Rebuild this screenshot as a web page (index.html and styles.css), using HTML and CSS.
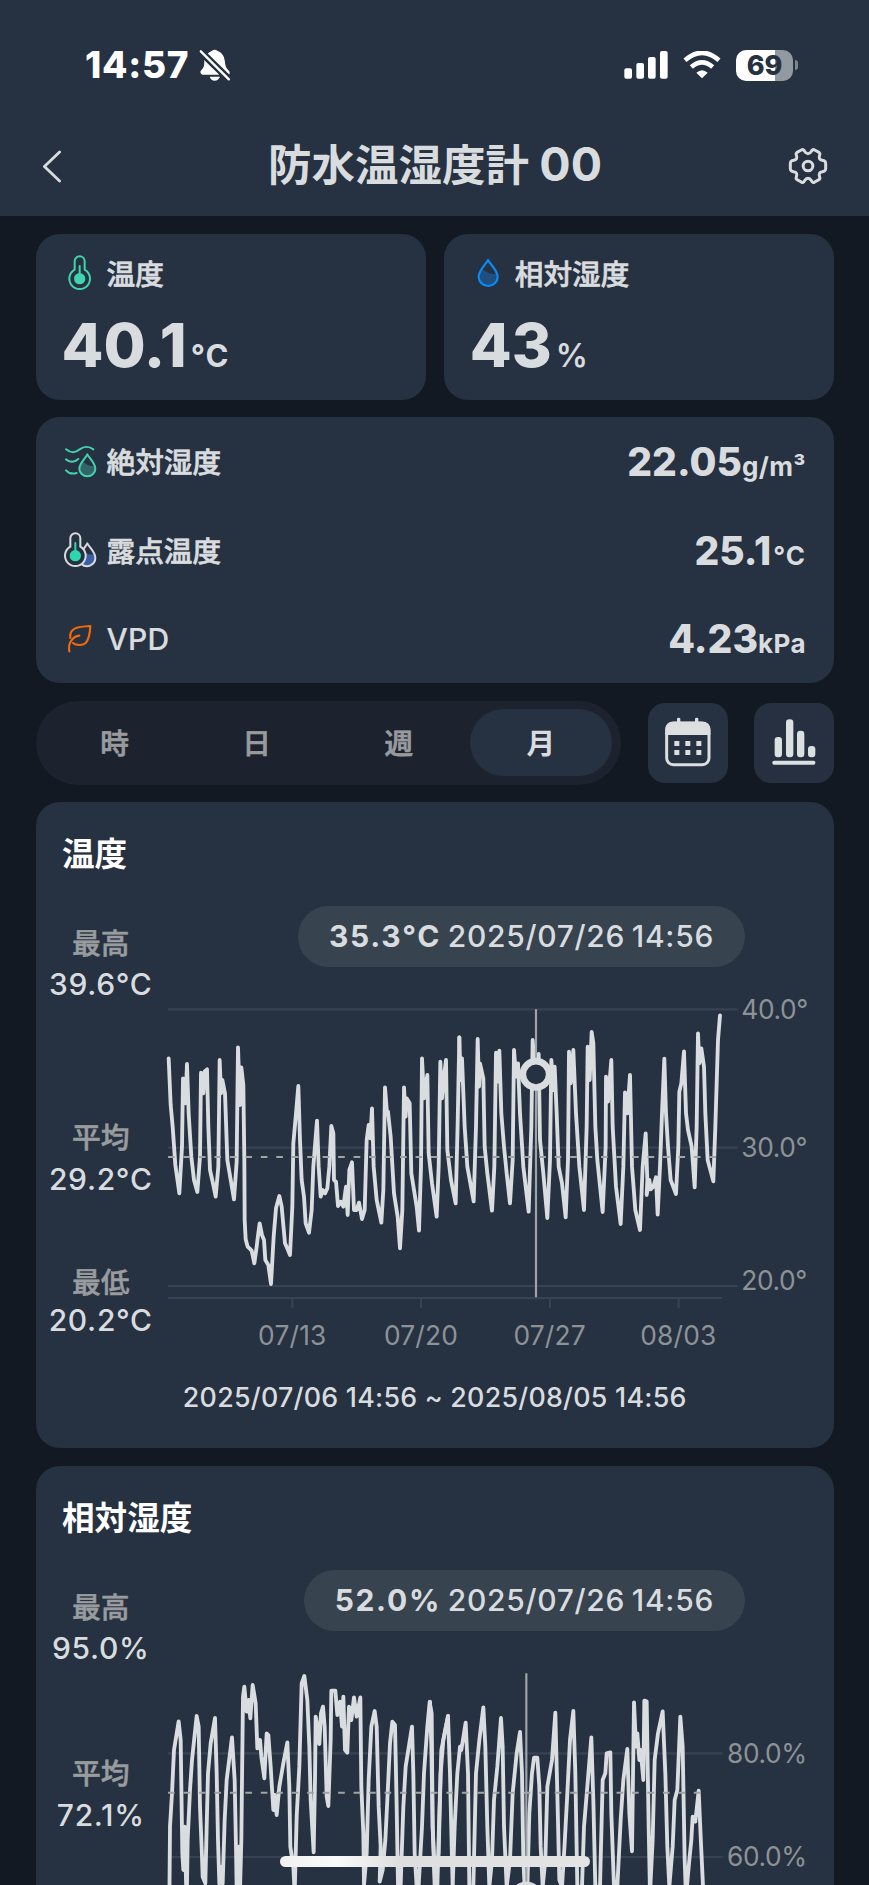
FILE: index.html
```html
<!DOCTYPE html>
<html lang="ja">
<head>
    <meta charset="UTF-8">
    <meta name="viewport" content="width=device-width, initial-scale=1.0">
    <title>防水温湿度計 00</title>
    <link rel="stylesheet" href="styles.css">
</head>
<body>
    <header>
        <div class="status-bar">
            <span class="clock">14:57</span>
            <svg class="bell" viewBox="0 0 96 100">
                <path d="M26 14 C32 8 35 8 38 6 Q47 -2 56 6 C70 11 76 22 78 38 C79 54 84 60 91 67 Q94 74 91 77 Z M15 33 L61 78 H10 Q1 74 5 66 C14 58 17 50 15 33Z M32 84 H63 Q58 96 47 96 Q36 96 32 84Z" fill="#fff"/>
                <path d="M5 7 L90 92" stroke="#263141" stroke-width="15"/>
                <path d="M5 7 L90 92" stroke="#fff" stroke-width="7" stroke-linecap="round"/>
            </svg>
            <svg class="signal" viewBox="0 0 132 84" fill="#fff">
                <rect x="1" y="52" width="23" height="31" rx="6"/>
                <rect x="37" y="36" width="23" height="47" rx="6"/>
                <rect x="72" y="18" width="23" height="65" rx="6"/>
                <rect x="108" y="0" width="23" height="83" rx="6"/>
            </svg>
            <svg class="wifi" viewBox="0 0 112 84" fill="none" stroke="#fff">
                <path d="M5 28 Q56 -17 107 28" stroke-width="14"/>
                <path d="M24 48 Q56 20 88 48" stroke-width="14"/>
                <path d="M39 65 Q56 50 73 65 L56 82Z" fill="#fff" stroke="none"/>
            </svg>
            <div class="battery"><span>69</span></div>
            <div class="battery-tip"></div>
        </div>
        <div class="title-bar">
            <svg class="back" viewBox="0 0 60 100" fill="none" stroke="#d9dcdf" stroke-width="8.5" stroke-linecap="round" stroke-linejoin="round">
                <path d="M53 6 L7 50 L53 94"/>
            </svg>
            <h1>防水温湿度計 <span>00</span></h1>
            <svg class="gear" viewBox="-60 -60 120 120" fill="none" stroke="#d9dcdf" stroke-width="9" stroke-linejoin="round">
                <path d="M0 -37 C8 -37 9 -43 13 -48 Q16 -51 20 -48 L33 -41 Q37 -38 35 -33 C32 -25 34 -18 43 -17 L48 -16 Q53 -14 53 -8 V8 Q53 14 48 16 L43 17 C34 18 32 25 35 33 Q37 38 33 41 L20 48 Q16 51 13 48 C9 43 8 37 0 37 C-8 37 -9 43 -13 48 Q-16 51 -20 48 L-33 41 Q-37 38 -35 33 C-32 25 -34 18 -43 17 L-48 16 Q-53 14 -53 8 V-8 Q-53 -14 -48 -16 L-43 -17 C-34 -18 -32 -25 -35 -33 Q-37 -38 -33 -41 L-20 -48 Q-16 -51 -13 -48 C-9 -43 -8 -37 0 -37Z"/>
                <circle r="14.5"/>
            </svg>
        </div>
    </header>

    <main>
        <section class="current">
            <div class="card current-card">
                <div class="label">
                    <svg class="icon" viewBox="0 0 108 108" fill="none" stroke="#41d3ae" stroke-width="6">
                        <path d="M35 44 V19 a15 15 0 0 1 30 0 V44 a31 31 0 1 1 -30 0Z"/>
                        <path d="M50 33 V70" stroke-linecap="round"/>
                        <circle cx="50" cy="71" r="17" fill="#41d3ae" stroke="none"/>
                    </svg>
                    <span>温度</span>
                </div>
                <div class="big-value">40.1<small>°C</small></div>
            </div>
            <div class="card current-card">
                <div class="label">
                    <svg class="icon" viewBox="0 0 108 108" fill="none">
                        <path d="M23 64 C24 54 28 48 33 44 C45 43 50 60 79 57 L80 64 a28 28 0 0 1 -57 0Z" fill="#1f4f7f"/>
                        <path d="M51 15 C57 27 80 47 80 65 a28.5 28 0 0 1 -57 0 C23 47 45 27 51 15Z" stroke="#0a8bf5" stroke-width="6.5" stroke-linejoin="round"/>
                    </svg>
                    <span>相対湿度</span>
                </div>
                <div class="big-value">43<small class="percent">%</small></div>
            </div>
        </section>

        <section class="card details">
            <div class="detail-row">
                <div class="label">
                    <svg class="icon" viewBox="0 0 108 108" fill="none" stroke="#41d3ae" stroke-width="6" stroke-linecap="round">
                        <path d="M9 19 C26 33 38 30 50 19 C62 10 78 9 91 19 M9 49 C22 59 34 59 46 48 M9 82 C18 92 28 94 41 90"/>
                        <path d="M50 78 C50 66 54 62 60 58 C68 60 72 70 95 70 L97 78 a23 23 0 0 1 -47 0Z" fill="#326567" stroke="none"/>
                        <path d="M73 34 C79 46 97 61 97 77 a24 23 0 0 1 -48 0 C49 61 68 46 73 34Z" stroke-linejoin="round"/>
                    </svg>
                    <span>絶対湿度</span>
                </div>
                <div class="value">22.05<small>g/m³</small></div>
            </div>
            <div class="detail-row">
                <div class="label">
                    <svg class="icon" viewBox="0 0 108 108" fill="none" stroke="#d9dcdf" stroke-width="6">
                        <path d="M60 58 C70 62 74 72 96 66 L97 78 a24 24 0 0 1 -44 14Z" fill="#3a60a6" stroke="none"/>
                        <path d="M60 53 C65 46 70 40 73 34 C79 46 97 61 97 77 C97 98 72 111 55 96" stroke-linejoin="round"/>
                        <path d="M22 44 V19 a15 15 0 0 1 30 0 V44 a31 31 0 1 1 -30 0Z" fill="#263141"/>
                        <path d="M37 33 V70" stroke="#2ed6ad" stroke-linecap="round"/>
                        <circle cx="37" cy="71" r="17" fill="#2ed6ad" stroke="none"/>
                    </svg>
                    <span>露点温度</span>
                </div>
                <div class="value">25.1<small class="degree">°C</small></div>
            </div>
            <div class="detail-row">
                <div class="label">
                    <svg class="icon" viewBox="0 0 108 108" fill="none" stroke="#f26a0a" stroke-width="6.5" stroke-linecap="round" stroke-linejoin="round">
                        <path d="M22 51 C18 20 45 17 82 15 C81 38 75 58 68 66 C58 75 38 73 30 66"/>
                        <path d="M49 44 C30 46 14 65 19 91"/>
                    </svg>
                    <span class="latin">VPD</span>
                </div>
                <div class="value">4.23<small>kPa</small></div>
            </div>
        </section>

        <nav class="toolbar">
            <ul class="range-tabs">
                <li>時</li>
                <li>日</li>
                <li>週</li>
                <li class="active">月</li>
            </ul>
            <button class="calendar-button" aria-label="カレンダー">
                <svg viewBox="0 0 240 240">
                    <g fill="#dcdee0">
                        <path d="M52 96 V80 Q52 56 76 56 H87 V47 Q87 44 92 44 Q97 44 97 47 V56 H141 V47 Q141 44 146 44 Q151 44 151 47 V56 H162 Q187 56 187 80 V96Z"/>
                        <rect x="79" y="114" width="15" height="15"/>
                        <rect x="112" y="114" width="15" height="15"/>
                        <rect x="145" y="114" width="15" height="15"/>
                        <rect x="79" y="141" width="15" height="15"/>
                        <rect x="112" y="141" width="15" height="15"/>
                        <rect x="145" y="141" width="15" height="15"/>
                    </g>
                    <rect x="56" y="60" width="127" height="125" rx="20" fill="none" stroke="#dcdee0" stroke-width="9"/>
                </svg>
            </button>
            <button class="graph-button" aria-label="グラフ">
                <svg viewBox="0 0 240 240" fill="#dbe1e0">
                    <rect x="62" y="102" width="22" height="61" rx="10"/>
                    <rect x="96" y="49" width="22" height="114" rx="10"/>
                    <rect x="129" y="83" width="22" height="80" rx="10"/>
                    <rect x="162" y="129" width="22" height="34" rx="10"/>
                    <rect x="55" y="173" width="129" height="12" rx="5"/>
                </svg>
            </button>
        </nav>

        <section class="card chart-card">
            <h2>温度</h2>
            <div class="chart-body">
                <dl class="stats">
                    <div><dt>最高</dt><dd>39.6°C</dd></div>
                    <div class="average"><dt>平均</dt><dd>29.2°C</dd></div>
                    <div class="lowest"><dt>最低</dt><dd>20.2°C</dd></div>
                </dl>
                <div class="chart">
                    <p class="tooltip"><b>35.3°C</b> 2025/07/26 14:56</p>
                    <svg class="plot" viewBox="48 -39 2004 1179">
                        <g class="grid">
                            <path d="M54 88H1763M54 503H1763M54 918H1763M54 954H1716"/>
                            <path d="M427 957V984M813 957V984M1200 957V984M1586 957V984"/>
                        </g>
                        <g class="series">
                            <polyline points="56,235 62,375 68,440 76,555 88,640 96,500 99,295 106,370 111,252 116,400 124,530 132,600 142,636 150,530 153,278 160,340 164,274 171,268 175,440 180,570 190,615 197,650 205,560 209,240 213,340 217,300 225,340 232,540 243,605 252,658 260,545 264,202 270,375 274,262 280,315 283,540 284,720 287,778 293,800 305,812 313,850 320,800 323,775 329,730 336,765 342,780 346,840 355,855 363,912 371,770 378,685 388,648 395,680 405,790 413,808 420,825 427,680 430,490 438,400 445,318 450,480 455,600 462,650 467,730 477,758 485,690 490,560 501,422 506,560 512,650 518,630 525,640 532,625 538,560 544,438 550,460 552,600 558,605 564,678 572,665 580,680 588,620 593,705 598,570 606,547 612,690 620,690 627,668 636,717 644,690 650,480 656,435 661,475 666,385 671,560 680,660 694,728 700,630 705,322 711,400 714,395 722,470 732,640 743,710 750,805 757,690 762,322 767,410 770,355 779,370 784,580 800,680 807,752 813,560 816,235 822,355 832,285 836,520 846,610 860,710 866,560 871,245 876,355 881,300 888,240 892,510 903,600 917,670 923,430 928,172"/>
                            <polyline transform="translate(870 0)" points="58,172 62,300 66,235 74,440 82,560 101,664 108,440 113,177 117,320 120,250 130,295 134,500 142,580 156,692 163,560 168,218 173,305 178,212 184,400 192,500 200,580 210,670 218,540 222,210 228,290 234,250 240,400 250,560 266,695 274,440 278,180 288,320 296,222 300,480 310,580 322,714 330,540 334,240 340,330 344,260 350,400 356,560 366,610 377,712 384,540 387,215 392,310 400,210 408,400 418,560 432,690 440,440 443,200 449,300 455,156 460,190 466,440 472,540 488,696 497,500 498,290 504,365 514,240 518,440 528,620 542,732 550,560 555,337 562,400 570,285 576,560 586,690 600,750 608,560 617,460 622,600 620,645 628,600 632,628 640,620 648,592 653,704 660,560 666,400 673,236 678,400 684,500 692,600 708,642 715,500 718,335 724,310 732,214 738,400 744,450 755,500 764,622 770,440 774,160 778,250 784,205 792,260 796,400 803,540 820,604 826,440 830,310 834,180 840,106"/>
                        </g>
                        <path class="average-line" d="M54 531H1700"/>
                        <path class="cursor" d="M1158 88V952"/>
                        <circle class="marker" cx="1158" cy="283" r="39.5"/>
                        <g class="axis">
                            <text x="1774" y="116">40.0°</text>
                            <text x="1774" y="531">30.0°</text>
                            <text x="1774" y="931">20.0°</text>
                        </g>
                        <g class="axis dates">
                            <text x="427" y="1096">07/13</text>
                            <text x="813" y="1096">07/20</text>
                            <text x="1199" y="1096">07/27</text>
                            <text x="1585" y="1096">08/03</text>
                        </g>
                    </svg>
                </div>
            </div>
            <p class="period">2025/07/06 14:56 ~ 2025/08/05 14:56</p>
        </section>

        <section class="card chart-card">
            <h2>相対湿度</h2>
            <div class="chart-body">
                <dl class="stats humidity">
                    <div><dt>最高</dt><dd>95.0%</dd></div>
                    <div class="average"><dt>平均</dt><dd>72.1%</dd></div>
                </dl>
                <div class="chart">
                    <p class="tooltip"><b>52.0%</b> 2025/07/26 14:56</p>
                    <svg class="plot" viewBox="48 -27 2004 1179">
                        <g class="grid">
                            <path d="M54 340H1718M54 651H1718"/>
                        </g>
                        <g class="series">
                            <polyline points="58,800 60,560 66,460 72,330 86,244 92,300 97,640 100,690 104,560 110,800 113,600 120,450 126,360 140,228 146,260 150,500 156,650 158,710 166,730 170,560 174,400 182,310 195,234 200,400 204,600 208,730 212,680 218,730 224,540 230,420 246,292 254,420 258,620 260,750 266,620 270,750 274,600 276,420 279,170 283,140 290,215 296,180 301,235 308,135 317,190 322,325 330,300 334,350 343,415 350,280 355,285 362,380 370,510 374,465 380,525 388,440 400,370 412,307 418,440 421,620 430,680 434,760 440,530 448,380 455,130 463,108 472,180 478,320 482,480 491,637 495,420 497,230 504,270 508,312 513,220 519,200 524,260 530,470 535,498 542,300 544,152 556,152 562,225 570,185 576,260 580,170 585,330 592,338 597,200 604,240 612,172 620,230 631,172 634,440 640,580 642,735 650,640 656,420 664,260 674,213 680,260 686,500 692,620 689,725 698,690 706,600 712,480 720,310 727,245 735,255 740,500 744,735 752,735 760,500 767,380 786,260 790,400 794,640 800,740 806,735 816,560 822,400 832,260 839,186 845,220 848,560 856,740 866,640 872,400 880,300 894,228"/>
                            <polyline transform="translate(840 -240)" points="0,425 4,560 8,800 14,980 22,980 28,760 34,570 54,468 60,640 66,900 68,980 74,800 82,640 90,560 94,570 107,488 114,640 118,980 130,980 138,640 148,540 160,442 166,560 172,800 178,980 186,900 192,720 202,620 213,474 218,560 222,800 230,980 240,900 248,700 260,580 270,516 276,640 280,900 284,980 292,980 298,760 306,640 312,593 322,593 328,680 332,860 338,980 346,900 352,680 366,600 376,458 382,700 388,960 396,980 404,850 412,700 420,540 430,453 436,640 442,980 456,980 462,800 472,680 484,532 490,720 496,980 510,980 518,660 526,640 530,580 541,577 544,760 552,980 562,980 572,780 580,660 592,567 598,760 606,874 612,427 618,560 622,520 628,600 632,570 640,660 643,422 650,424 656,800 660,1000 668,840 674,600 684,520 698,454 706,640 712,860 718,980 728,860 734,720 742,690 751,470 758,560 764,900 768,1010 778,900 784,840 788,770 796,785 806,692 812,830 820,1000"/>
                        </g>
                        <path class="average-line" d="M54 458H1652"/>
                        <path class="cursor" d="M1129 100V900"/>
                        <circle class="marker" cx="1129" cy="774" r="39.5"/>
                        <g class="axis">
                            <text x="1731" y="368">80.0%</text>
                            <text x="1731" y="678">60.0%</text>
                        </g>
                    </svg>
                </div>
            </div>
        </section>
    </main>
    <div class="home-indicator"></div>
</body>
</html>
```
FILE: styles.css
```css
* {
    box-sizing: border-box;
}

html {
    height: 1885px;
    overflow: hidden;
}

body {
    position: relative;
    height: 1885px;
    margin: 0;
    overflow: hidden;
    background-color: #121923;
    color: #d9dcdf;
    font-family: Inter, "Noto Sans CJK JP", sans-serif;
}

h1, h2, p, ul, dl, dd {
    margin: 0;
    padding: 0;
}

header {
    height: 216px;
    background-color: #263141;
}

/* Status bar */
.status-bar {
    display: flex;
    align-items: center;
    height: 130px;
    padding: 0 71px 0 85px;
    color: #fff;
}

.clock {
    width: 105px;
    font-size: 37px;
    font-weight: 800;
    letter-spacing: 0.7px;
    line-height: 44px;
    white-space: nowrap;
}

.bell {
    width: 32px;
    height: 33px;
    margin: 0 auto 0 9px;
}

.signal {
    width: 44px;
    height: 28px;
    margin-right: 15px;
}

.wifi {
    width: 38px;
    height: 28px;
    margin-right: 15px;
}

.battery {
    width: 57px;
    height: 31px;
    border-radius: 10px;
    background: linear-gradient(90deg, #fff 69%, #9299a1 69%);
    color: #263141;
    font-size: 27px;
    font-weight: 800;
    line-height: 31px;
    text-align: center;
}

.battery-tip {
    width: 3px;
    height: 10px;
    margin-left: 2px;
    border-radius: 0 4px 4px 0;
    background-color: #7d858e;
}

/* Title bar */
.title-bar {
    display: flex;
    align-items: center;
    justify-content: space-between;
    height: 72px;
    padding: 0 41px 0 42px;
}

.back {
    width: 20px;
    height: 33px;
    margin-right: 20px;
}

h1 {
    padding-bottom: 3px;
    font-size: 43.5px;
    font-weight: 700;
    line-height: 69px;
}

h1 span {
    font-size: 46.5px;
}

.gear {
    width: 40px;
    height: 40px;
}

/* Cards */
main {
    display: flex;
    flex-direction: column;
    gap: 18px;
    padding: 18px 35px 0 35.5px;
}

.card {
    border-radius: 24px;
    background-color: #263141;
}

.current {
    display: flex;
    gap: 18px;
}

.current-card {
    flex: 1;
    height: 166px;
    padding: 20px 27px;
}

.label {
    display: flex;
    align-items: center;
    gap: 8px;
    height: 38px;
    font-size: 28.7px;
    font-weight: 500;
    -webkit-text-stroke: 0.6px;
}

.label span {
    padding-bottom: 2px;
}

.label .latin {
    padding-bottom: 0;
    font-size: 30px;
    letter-spacing: 0.3px;
    -webkit-text-stroke: 0.2px;
}

.icon {
    width: 36px;
    height: 36px;
}

.big-value {
    margin-top: 16px;
    margin-left: -1px;
    font-size: 61px;
    font-weight: 800;
    line-height: 74px;
}

.big-value small {
    margin-left: 4px;
    font-size: 31px;
    font-weight: 700;
    letter-spacing: 1px;
}

.big-value .percent {
    font-size: 32px;
    font-weight: 600;
}

.details {
    display: flex;
    flex-direction: column;
    height: 266px;
    margin-top: -1px;
    padding-right: 28px;
    padding-left: 27px;
}

.detail-row {
    display: flex;
    flex: 1;
    align-items: center;
    justify-content: space-between;
}

.value {
    font-size: 39px;
    font-weight: 800;
}

.value small {
    font-size: 26px;
    font-weight: 700;
    letter-spacing: 0.4px;
}

.value .degree {
    margin-left: 2px;
    letter-spacing: 1px;
}

/* Range tabs and buttons */
.toolbar {
    display: flex;
    align-items: center;
    height: 84px;
}

.range-tabs {
    display: flex;
    width: 585.5px;
    height: 84px;
    margin-right: 27px;
    padding: 8px 9px 9px 8px;
    border-radius: 42px;
    background-color: #1d232e;
    list-style: none;
}

.range-tabs li {
    flex: 1;
    padding-top: 2px;
    border-radius: 34px;
    color: #989b9d;
    font-size: 28.7px;
    font-weight: 500;
    line-height: 65px;
    text-align: center;
    -webkit-text-stroke: 0.7px;
}

.range-tabs .active {
    background-color: #263141;
    color: #d9dcdf;
    font-weight: 600;
    -webkit-text-stroke: 0;
}

.toolbar button {
    width: 80px;
    height: 80px;
    padding: 0;
    border: none;
    border-radius: 17px;
    background-color: #263141;
}

.toolbar .graph-button {
    margin-left: 26px;
    background-color: #273041;
}

.toolbar button svg {
    display: block;
}

/* Charts */
.chart-card {
    height: 646px;
    margin-top: -1px;
}

.chart-card + .chart-card {
    margin-top: 0;
}

h2 {
    height: 104px;
    padding: 28px 27px 0 26.5px;
    color: #fff;
    font-size: 32.6px;
    font-weight: 700;
    line-height: 48px;
}

.chart-body {
    display: flex;
}

.stats {
    display: flex;
    flex-direction: column;
    width: 130.5px;
    padding-top: 18px;
    text-align: center;
}

.stats dt {
    color: #989c9e;
    font-size: 28.8px;
    font-weight: 500;
    line-height: 40px;
    -webkit-text-stroke: 0.5px;
}

.stats dd {
    padding-top: 1px;
    font-size: 30px;
    font-weight: 500;
    letter-spacing: 0.7px;
    line-height: 38px;
}

.stats .average {
    margin: 115px 0 65px;
}

.stats .average dd {
    padding-top: 2px;
}

.stats .lowest dd {
    padding-top: 0;
    margin-top: -2px;
}

.stats.humidity .average {
    margin-top: 87px;
}

.chart {
    display: flex;
    flex-direction: column;
    width: 668px;
}

.tooltip {
    align-self: flex-end;
    height: 61px;
    margin-right: 89px;
    padding: 0 31px;
    border-radius: 31px;
    background-color: #384350;
    font-size: 30px;
    font-weight: 500;
    letter-spacing: 0.7px;
    line-height: 61px;
    white-space: nowrap;
    word-spacing: -2px;
}

.tooltip b {
    letter-spacing: 1.7px;
}

.plot {
    width: 668px;
    height: 393px;
}

.grid {
    fill: none;
    stroke: #374252;
    stroke-width: 6.5;
}

.series {
    fill: none;
    stroke: #d9dde0;
    stroke-width: 11.5;
    stroke-linecap: round;
    stroke-linejoin: round;
}

.average-line {
    stroke: #a3a3a1;
    stroke-width: 6;
    stroke-dasharray: 20 26.4;
}

.cursor {
    stroke: #9fa4a8;
    stroke-width: 6.5;
}

.marker {
    fill: #263141;
    stroke: #d9dde0;
    stroke-width: 20;
}

.axis {
    fill: #8d9296;
    font-size: 79px;
    font-weight: 400;
    letter-spacing: -1.2px;
}

.dates {
    letter-spacing: 0.6px;
    text-anchor: middle;
}

.period {
    margin-top: 19px;
    font-size: 26.8px;
    font-weight: 500;
    letter-spacing: 0.26px;
    line-height: 36px;
    text-align: center;
}

.home-indicator {
    position: absolute;
    bottom: 18px;
    left: 280px;
    width: 310px;
    height: 11px;
    border-radius: 6px;
    background: linear-gradient(90deg, #f0f0f0, #fbfbfb 18%, #dedede 38%, #e4e4e4);
}
```
